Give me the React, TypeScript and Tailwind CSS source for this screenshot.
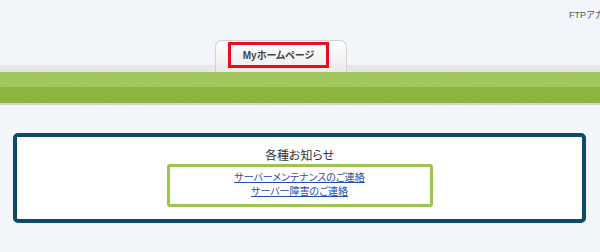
import React from 'react';

const font = "font-['Liberation_Sans','Noto_Sans_CJK_JP',sans-serif]";

const App = () => {
  return (
    <div className={`w-[600px] h-[252px] overflow-hidden bg-[#f2f6fb] ${font}`}>
      {/* header */}
      <div className="h-[40px] pl-[569px] pt-[9px] whitespace-nowrap text-[9px] leading-[12px] text-[#555]">
        FTPアカウント
      </div>

      {/* tabs */}
      <div className="h-[32px] pl-[215px] flex items-end bg-[linear-gradient(to_bottom,transparent_25px,#e6e6e6_25px)]">
        <div className="relative h-[32px] w-[132px] rounded-t-[7px] border border-b-0 border-[#d2d2d2] bg-[linear-gradient(to_bottom,#ffffff,#eaeaea)]">
          <div className="absolute left-[12px] top-[1px] w-[101px] h-[26px] border-[3px] border-[#e60d1f] flex items-center justify-center text-[10px] font-bold text-[#444] [font-feature-settings:'palt']">
            Myホームページ
          </div>
        </div>
      </div>

      {/* green band */}
      <div className="h-[31px] relative bg-[linear-gradient(to_bottom,#9dc558_0px,#9dc558_15px,#86b53a_15px,#86b53a_31px)]">
        <div className="absolute inset-0 bg-[repeating-linear-gradient(135deg,rgba(255,255,255,0.07)_0px,rgba(255,255,255,0.07)_1px,transparent_1px,transparent_3px)]" />
      </div>
      <div className="h-[2px] bg-[#d4d4d4]" />

      {/* notices */}
      <div className="pt-[28px] px-[13px]">
        <div className="w-[573px] h-[90px] rounded-[5px] border-4 border-[#0c4a6a] bg-white pt-[12px]">
          <div className="text-center text-[12px] leading-[14px] text-[#333] [font-feature-settings:'palt']">
            各種お知らせ
          </div>
          <div className="mx-auto mt-px w-[266px] h-[43px] rounded-[3px] border-[3px] border-[#9dc44f] pt-[4px] flex flex-col items-center">
            <a href="#" className="text-[10px] leading-[14px] text-[#1f4fa8] underline [font-feature-settings:'palt']">
              サーバーメンテナンスのご連絡
            </a>
            <a href="#" className="text-[10px] leading-[14px] text-[#1f4fa8] underline [font-feature-settings:'palt']">
              サーバー障害のご連絡
            </a>
          </div>
        </div>
      </div>
    </div>
  );
};

export default App;
